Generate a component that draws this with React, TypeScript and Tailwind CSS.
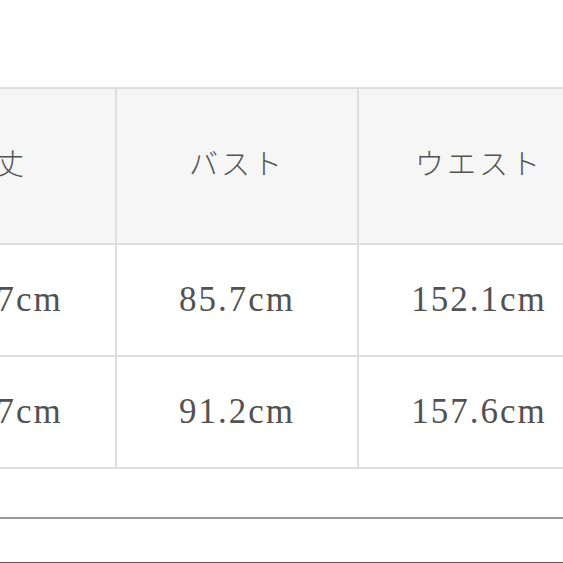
import React from 'react';

const headers = ['着丈', 'バスト', 'ウエスト', '肩幅'];
const rows = [
  ['104.7cm', '85.7cm', '152.1cm', '38.5cm'],
  ['106.7cm', '91.2cm', '157.6cm', '40.0cm'],
];

const App = () => {
  return (
    <div className="w-[563px] h-[563px] overflow-hidden bg-white font-['Liberation_Serif','Noto_Sans_CJK_JP',serif] text-[#525252]">
      <div className="pt-[87px] ml-[-127px]">
        <div className="grid grid-cols-[242px_242px_242px_242px] w-max border-t-2 border-l-2 border-[#dedede]">
          {headers.map((h) => (
            <div
              key={h}
              className="h-[156px] flex items-center justify-center bg-[#f6f6f6] border-r-2 border-b-2 border-[#dedede] text-[29px] font-light tracking-[3px]"
            >
              {h}
            </div>
          ))}
          {rows.map((row, i) =>
            row.map((v, j) => (
              <div
                key={`${i}-${j}`}
                className="h-[112px] flex items-center justify-center bg-white border-r-2 border-b-2 border-[#dedede] text-[35px] tracking-[2px]"
              >
                {v}
              </div>
            ))
          )}
        </div>
      </div>
      <div className="mt-[48px] h-[2px] bg-[#9a9a9a]" />
      <div className="mt-[43px] h-[2px] bg-[#555555]" />
    </div>
  );
};

export default App;
